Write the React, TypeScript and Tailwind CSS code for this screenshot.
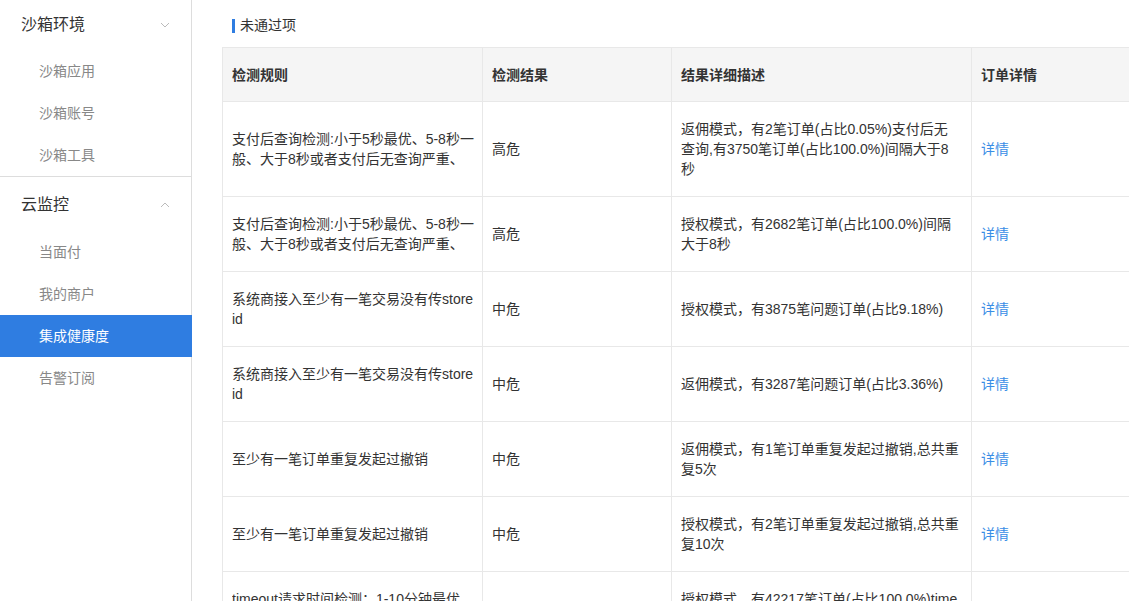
import React from 'react'

const font = { fontFamily: '"Liberation Sans", "Noto Sans CJK SC", sans-serif' }

const Chevron = ({ up }: { up?: boolean }) => (
  <svg width="10" height="10" viewBox="0 0 10 10" className="text-[#bbb]">
    <path d={up ? 'M1 7 L5 3 L9 7' : 'M1 3 L5 7 L9 3'} fill="none" stroke="currentColor" strokeWidth="1" />
  </svg>
)

const groups = [
  { title: '沙箱环境', open: false, head: 'h-[50px]', items: ['沙箱应用', '沙箱账号', '沙箱工具'] },
  { title: '云监控', open: true, head: 'h-[54px] pt-[2px]', items: ['当面付', '我的商户', '集成健康度', '告警订阅'] },
]

const Sidebar = () => (
  <aside className="relative z-10 h-full w-[192px] shrink-0 border-r border-[#ddd]">
    {groups.map((g, gi) => (
      <div key={g.title} className={gi === 0 ? 'border-b border-[#ddd]' : ''}>
        <div className={`flex items-center justify-between px-[21px] text-[16px] text-[#333] ${g.head}`}>
          <span>{g.title}</span>
          <Chevron up={g.open} />
        </div>
        {g.items.map((it) => {
          const active = it === '集成健康度'
          return (
            <div
              key={it}
              className={
                active
                  ? '-mr-px flex h-[42px] items-center bg-[#2f7de1] pl-[39px] text-[14px] text-white'
                  : 'flex h-[42px] items-center pl-[39px] text-[14px] text-[#888]'
              }
            >
              {it}
            </div>
          )
        })}
      </div>
    ))}
  </aside>
)

const rows = [
  {
    rule: '支付后查询检测:小于5秒最优、5-8秒一般、大于8秒或者支付后无查询严重、',
    level: '高危',
    desc: '返佣模式，有2笔订单(占比0.05%)支付后无查询,有3750笔订单(占比100.0%)间隔大于8秒',
  },
  {
    rule: '支付后查询检测:小于5秒最优、5-8秒一般、大于8秒或者支付后无查询严重、',
    level: '高危',
    desc: '授权模式，有2682笔订单(占比100.0%)间隔大于8秒',
  },
  { rule: '系统商接入至少有一笔交易没有传store id', level: '中危', desc: '授权模式，有3875笔问题订单(占比9.18%)' },
  { rule: '系统商接入至少有一笔交易没有传store id', level: '中危', desc: '返佣模式，有3287笔问题订单(占比3.36%)' },
  { rule: '至少有一笔订单重复发起过撤销', level: '中危', desc: '返佣模式，有1笔订单重复发起过撤销,总共重复5次' },
  { rule: '至少有一笔订单重复发起过撤销', level: '中危', desc: '授权模式，有2笔订单重复发起过撤销,总共重复10次' },
  {
    rule: 'timeout请求时间检测：1-10分钟最优、10-30分钟一般、大于30分钟严重',
    level: '中危',
    desc: '授权模式，有42217笔订单(占比100.0%)timeout时间大于10分钟',
  },
]

const App = () => {
  return (
    <div className="flex h-[601px] w-[1129px] overflow-hidden bg-white" style={font}>
      <Sidebar />
      <main className="min-w-0 flex-1 overflow-hidden pl-[30px]">
        <div className="flex h-[47px] items-center pl-[10px] pt-[4px]">
          <span className="mr-[5px] h-[14px] w-[3px] bg-[#2f7de1]" />
          <span className="text-[14px] text-[#333]">未通过项</span>
        </div>
        <table className="w-[960px] table-fixed border-collapse break-all text-[14px] leading-[20px] text-[#333]">
          <colgroup>
            <col className="w-[260px]" />
            <col className="w-[189px]" />
            <col className="w-[300px]" />
            <col />
          </colgroup>
          <thead>
            <tr className="h-[54px] bg-[#f5f5f5]">
              {['检测规则', '检测结果', '结果详细描述', '订单详情'].map((h) => (
                <th key={h} className="border border-[#e8e8e8] px-[9px] text-left font-bold">
                  {h}
                </th>
              ))}
            </tr>
          </thead>
          <tbody>
            {rows.map((r, i) => (
              <tr key={i}>
                <td className="border border-[#e8e8e8] py-[17px] pl-[9px] pr-[6px]">
                  <div className="max-h-[40px] overflow-hidden">{r.rule}</div>
                </td>
                <td className="border border-[#e8e8e8] px-[9px] py-[17px]">{r.level}</td>
                <td className="border border-[#e8e8e8] py-[17px] pl-[9px] pr-[11px]">{r.desc}</td>
                <td className="border border-[#e8e8e8] px-[9px] py-[17px]">
                  <a className="cursor-pointer text-[#3a8ee6]">详情</a>
                </td>
              </tr>
            ))}
          </tbody>
        </table>
      </main>
    </div>
  )
}

export default App
